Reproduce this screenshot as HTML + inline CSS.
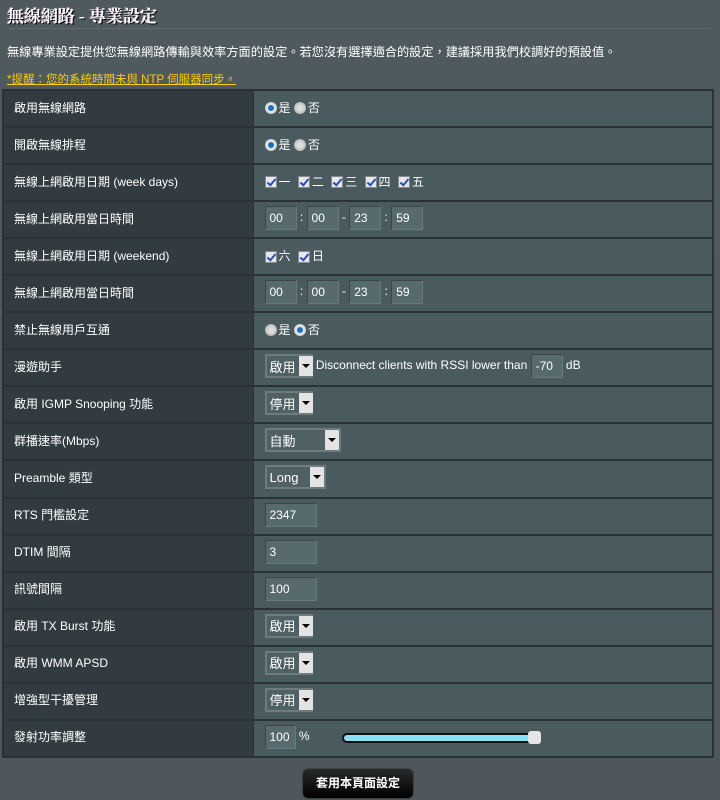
<!DOCTYPE html>
<html><head><meta charset="utf-8"><style>
*{box-sizing:border-box;margin:0;padding:0}
body{width:720px;height:800px;background:linear-gradient(#4f5a5e,#4e585c);font-family:"Liberation Sans","Noto Sans CJK TC",sans-serif;color:#fff;position:relative;overflow:hidden}
.title{position:absolute;left:7px;top:2px;font-size:17px;font-weight:bold;font-family:"Liberation Serif","Noto Serif CJK SC",serif;text-shadow:1px 1px 0 #000,-1px 0 0 #c9c;}
.hr{position:absolute;left:7px;top:28px;width:703px;height:1px;background:#38474b;border-bottom:1px solid #5d6a6e}
.desc{position:absolute;left:7px;top:42px;font-size:12.2px;color:#fff;white-space:nowrap}
.warn{position:absolute;left:7px;top:71px;font-size:11.5px;color:#ffcc00;text-decoration:underline;white-space:nowrap}
table{position:absolute;left:2px;top:89px;width:712px;border-collapse:collapse;border:2px solid #2a3235}
td{height:37.05px;border-top:2px solid #2a3235;font-size:12px;vertical-align:middle;padding-bottom:3px;white-space:nowrap}
td.l{width:250px;background:#323c40;padding-left:10px;border-right:1px solid #2a3235}
td.r{background:#495b5f;padding-left:11px}
.rad{display:inline-block;width:12px;height:12px;border-radius:50%;background:radial-gradient(circle,#ddd 30%,#999 100%);vertical-align:-2px;margin-right:2px}
.rad.on{background:radial-gradient(circle,#1a6fb8 30%,#eee 40%,#aaa 100%)}
.cb{display:inline-block;width:12px;height:12px;background:#e6e6ee;border:1px solid #888;vertical-align:middle;margin:0 2px 0 4px;position:relative}
.cb:after{content:"";position:absolute;left:3px;top:0px;width:3px;height:7px;border:solid #2d4fb0;border-width:0 2px 2px 0;transform:rotate(40deg)}
.cb:first-child{margin-left:0}
.in{display:inline-block;height:24px;background:#576b6f;border:1px solid #3a4649;border-right-color:#687a7e;border-bottom-color:#687a7e;vertical-align:middle;padding-left:4px;line-height:22px;font-size:12px}
.sel{display:inline-flex;height:24px;border:2px solid #6e7c80;vertical-align:middle;background:#4f6165;align-items:center;font-size:13px;white-space:nowrap}
.sel span{padding:0 3px;white-space:nowrap}
.sel b{margin-left:auto;flex:none;width:14px;height:20px;background:#e4e4e4;position:relative}
.sel b:after{content:"";position:absolute;left:3px;top:8px;border:4px solid transparent;border-top:4px solid #000;border-bottom:0}
.btn{position:absolute;left:303px;top:769px;width:110px;height:29px;border-radius:5px;background:linear-gradient(#2a2a2a,#000);font-size:12px;font-weight:bold;text-align:center;line-height:29px;box-shadow:0 0 2px #222}
</style></head><body>
<div class="title">無線網路 - 專業設定</div>
<div class="hr"></div>
<div class="desc">無線專業設定提供您無線網路傳輸與效率方面的設定。若您沒有選擇適合的設定，建議採用我們校調好的預設值。</div>
<div class="warn">*提醒：您的系統時間未與 NTP 伺服器同步。</div>
<table>
<tr><td class="l">啟用無線網路</td><td class="r"><span class="rad on"></span>是 <span class="rad"></span>否</td></tr>
<tr><td class="l">開啟無線排程</td><td class="r"><span class="rad on"></span>是 <span class="rad"></span>否</td></tr>
<tr><td class="l">無線上網啟用日期 (week days)</td><td class="r"><span class="cb"></span>一 <span class="cb"></span>二 <span class="cb"></span>三 <span class="cb"></span>四 <span class="cb"></span>五</td></tr>
<tr><td class="l">無線上網啟用當日時間</td><td class="r"><span class="in" style="width:32px">00</span> : <span class="in" style="width:32px">00</span> - <span class="in" style="width:32px">23</span> : <span class="in" style="width:32px">59</span></td></tr>
<tr><td class="l">無線上網啟用日期 (weekend)</td><td class="r"><span class="cb"></span>六 <span class="cb"></span>日</td></tr>
<tr><td class="l">無線上網啟用當日時間</td><td class="r"><span class="in" style="width:32px">00</span> : <span class="in" style="width:32px">00</span> - <span class="in" style="width:32px">23</span> : <span class="in" style="width:32px">59</span></td></tr>
<tr><td class="l">禁止無線用戶互通</td><td class="r"><span class="rad"></span>是 <span class="rad on"></span>否</td></tr>
<tr><td class="l">漫遊助手</td><td class="r"><span class="sel" style="width:48px"><span>啟用</span><b></b></span> Disconnect clients with RSSI lower than <span class="in" style="width:32px">-70</span> dB</td></tr>
<tr><td class="l">啟用 IGMP Snooping 功能</td><td class="r"><span class="sel" style="width:48px"><span>停用</span><b></b></span></td></tr>
<tr><td class="l">群播速率(Mbps)</td><td class="r"><span class="sel" style="width:76px"><span>自動</span><b></b></span></td></tr>
<tr><td class="l">Preamble 類型</td><td class="r"><span class="sel" style="width:61px"><span>Long</span><b></b></span></td></tr>
<tr><td class="l">RTS 門檻設定</td><td class="r"><span class="in" style="width:52px">2347</span></td></tr>
<tr><td class="l">DTIM 間隔</td><td class="r"><span class="in" style="width:52px">3</span></td></tr>
<tr><td class="l">訊號間隔</td><td class="r"><span class="in" style="width:52px">100</span></td></tr>
<tr><td class="l">啟用 TX Burst 功能</td><td class="r"><span class="sel" style="width:48px"><span>啟用</span><b></b></span></td></tr>
<tr><td class="l">啟用 WMM APSD</td><td class="r"><span class="sel" style="width:48px"><span>啟用</span><b></b></span></td></tr>
<tr><td class="l">增強型干擾管理</td><td class="r"><span class="sel" style="width:48px"><span>停用</span><b></b></span></td></tr>
<tr><td class="l">發射功率調整</td><td class="r" style="position:relative"><span class="in" style="width:31px">100</span> %<span style="position:absolute;left:88px;top:12px;width:194px;height:10px;border:2px solid #111;border-radius:5px;background:#8fdcf5"></span><span style="position:absolute;left:274px;top:10px;width:13px;height:13px;border-radius:3px;background:#e4e6e8"></span></td></tr>
</table>
<div class="btn">套用本頁面設定</div>
</body></html>
